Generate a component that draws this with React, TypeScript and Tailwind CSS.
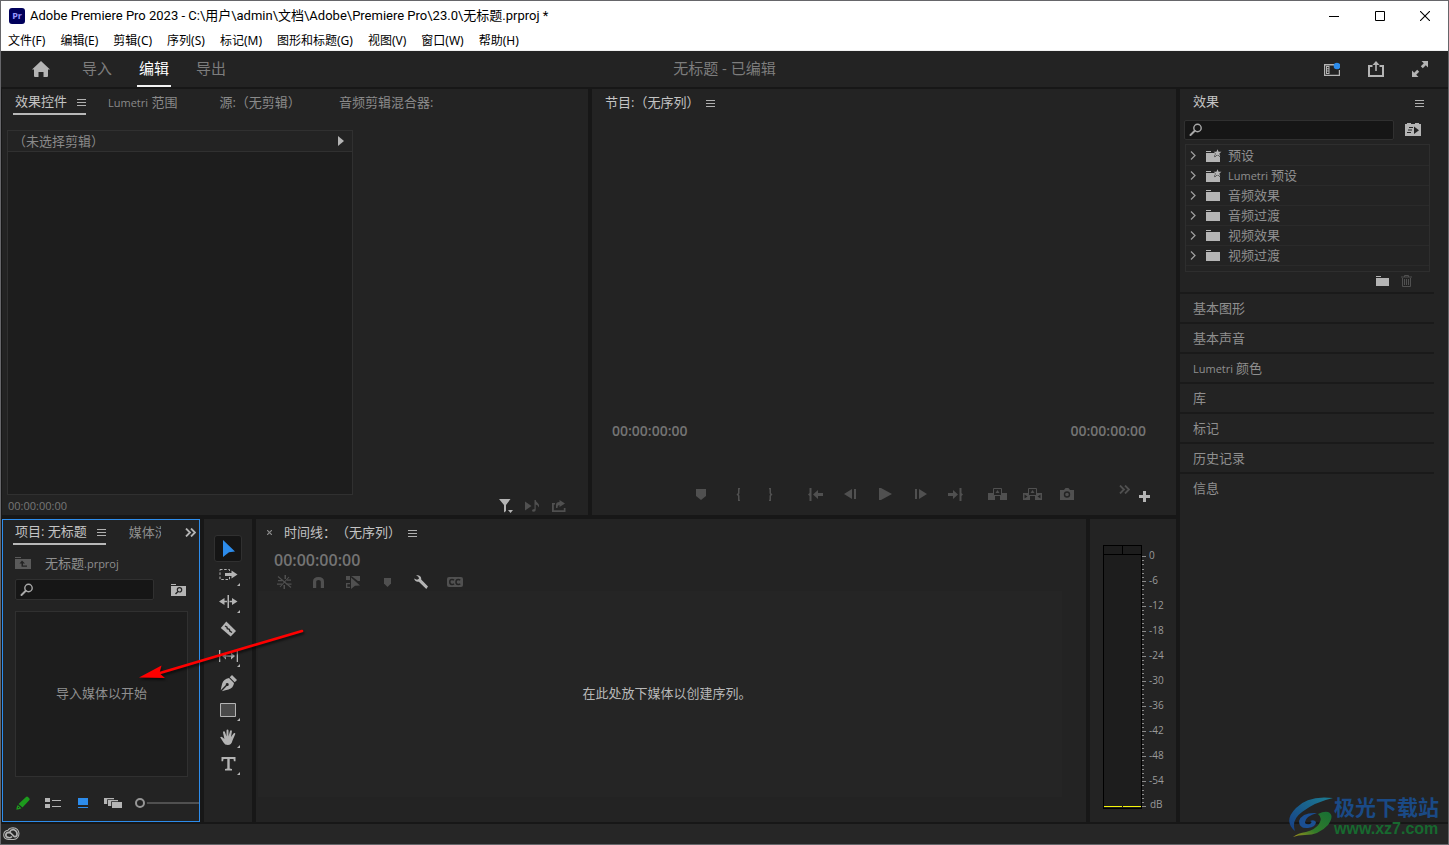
import type { ReactNode } from "react";

type IconProps = { w: number; h: number; className?: string; children: ReactNode };

function Icon({ w, h, className = "", children }: IconProps) {
  return (
    <svg
      width={w}
      height={h}
      viewBox={`0 0 ${w} ${h}`}
      fill="currentColor"
      aria-hidden="true"
      className={`block shrink-0 ${className}`}
    >
      {children}
    </svg>
  );
}

const MenuLines = () => (
  <Icon w={9} h={11} className="text-[#b0b0b0]">
    <path d="M0 3h9v1H0zM0 6h9v1H0zM0 9h9v1H0z" />
  </Icon>
);

const SearchGlyph = () => (
  <Icon w={14} h={14} className="text-[#a8a8a8]">
    <circle cx="8.5" cy="5" r="3.7" fill="none" stroke="currentColor" strokeWidth="1.4" />
    <path d="M5.8 7.8L1.5 12" stroke="currentColor" strokeWidth="2" strokeLinecap="round" />
  </Icon>
);

const FolderGlyph = () => (
  <Icon w={14} h={12}>
    <path d="M0 0h5v1H0zM0 2h14v9H0z" />
  </Icon>
);

const PresetGlyph = () => (
  <Icon w={16} h={14}>
    <path d="M0 2h5v1H0zM0 4h14v9H0z" />
    <path
      d="M11.500.3l1.100 2.500h2.900l-2.200 1.800 1 3-2.800-1.800-2.800 1.800 1-3-2.200-1.800h2.900z"
      stroke="#232323"
      strokeWidth="1"
      paintOrder="stroke"
    />
  </Icon>
);

const Chevrons = () => (
  <Icon w={11} h={9}>
    <path d="M1 .5l4 4-4 4M6 .5l4 4-4 4" fill="none" stroke="currentColor" strokeWidth="1.8" />
  </Icon>
);

const MarkerGlyph = () => (
  <Icon w={10} h={11}>
    <path d="M0 0h10v7l-5 4-5-4z" />
  </Icon>
);

const menus = ["文件(F)", "编辑(E)", "剪辑(C)", "序列(S)", "标记(M)", "图形和标题(G)", "视图(V)", "窗口(W)", "帮助(H)"];

function TitleBar() {
  return (
    <header className="border-b border-[#f0f0f0] bg-white text-black">
      <div className="flex h-[29px] items-center pl-2">
        <span className="flex h-4 w-4 items-center justify-center rounded-[3px] bg-[#00005b] text-[9px] font-bold leading-none text-[#9999ff]">
          Pr
        </span>
        <h1 className="ml-[5px] flex-1 font-['Roboto','Noto_Sans_CJK_SC',sans-serif] text-[13px] leading-4">
          Adobe Premiere Pro 2023 - C:\用户\admin\文档\Adobe\Premiere Pro\23.0\无标题.prproj *
        </h1>
        <button aria-label="最小化" className="flex h-7 w-[46px] items-center justify-center">
          <Icon w={10} h={10}><path d="M0 5h10v1H0z" /></Icon>
        </button>
        <button aria-label="最大化" className="flex h-7 w-[45px] items-center justify-center">
          <Icon w={10} h={10}><path d="M.5.5h9v9h-9z" fill="none" stroke="currentColor" /></Icon>
        </button>
        <button aria-label="关闭" className="flex h-7 w-[46px] items-center justify-center">
          <Icon w={10} h={10}><path d="M0 0l10 10M10 0L0 10" stroke="currentColor" strokeWidth="1.100" /></Icon>
        </button>
      </div>
      <nav className="flex h-5 items-center gap-[15px] pt-[2px] pl-[7px] font-['Noto_Sans','Noto_Sans_CJK_SC',sans-serif] text-[12px] leading-4">
        {menus.map((m) => (
          <button key={m}>{m}</button>
        ))}
      </nav>
    </header>
  );
}

function WorkspaceBar() {
  return (
    <div className="grid h-9 shrink-0 grid-cols-[1fr_auto_1fr] items-center bg-[#232323]">
      <div className="flex h-full items-center pl-[31px] text-[15px] leading-5 text-[#7d7d7d]">
        <button aria-label="主页" className="text-[#b4b4b4]">
          <Icon w={18} h={16}>
            <path d="M9 0l9 8.500h-2V15q0 1-1 1h-3.500v-5h-5v5H3q-1 0-1-1V8.500H0z" />
          </Icon>
        </button>
        <button className="ml-[30px] h-full border-b-2 border-transparent px-[2px]">导入</button>
        <button className="ml-[23px] h-full border-b-2 border-[#f2f2f2] px-[2px] text-white">编辑</button>
        <button className="ml-[23px] h-full border-b-2 border-transparent px-[2px]">导出</button>
      </div>
      <div className="pb-[2px] text-[15px] leading-5 text-[#7d7d7d]">无标题 - 已编辑</div>
      <div className="flex items-center justify-end gap-7 pr-5 text-[#b4b4b4]">
        <button aria-label="工作区">
          <Icon w={16} h={15}>
            <path d="M0 2h10v1.500H1.200v9.300h13.600V8H16v6H0z" />
            <path d="M2 4h3.500v8H2zM3 5v1.300h1.500V5zM3 7.300v1.300h1.500V7.300zM3 9.600v1.300h1.500V9.600z" fillRule="evenodd" />
            <circle cx="13" cy="4" r="3.300" fill="#2d8ceb" />
          </Icon>
        </button>
        <button aria-label="快速导出">
          <Icon w={16} h={16}>
            <path d="M4.500 5H1v10h14V5h-3.500" fill="none" stroke="currentColor" strokeWidth="2" />
            <path d="M7.200 3h1.600v7H7.200zM8 0l3.500 4h-7z" />
          </Icon>
        </button>
        <button aria-label="全屏">
          <Icon w={16} h={16}>
            <path d="M9.500 0H16v6.500l-2.200-2.200-3 3-2-2 3-3zM0 9.500l2.200 2.200 3-3 2 2-3 3L6.500 16H0z" />
          </Icon>
        </button>
      </div>
    </div>
  );
}

function EffectControls() {
  return (
    <section className="flex min-w-0 flex-[586] flex-col bg-[#232323]">
      <div className="flex h-[26px] shrink-0 items-stretch pl-[11px] text-[13px] leading-[26px] text-[#8a8a8a]">
        <button className="flex items-center gap-[10px] border-b-2 border-[#b8b8b8] pl-[2px] text-[#c4c4c4]">
          效果控件 <MenuLines />
        </button>
        <button className="ml-[22px]"><span className="text-[11px]">Lumetri</span> 范围</button>
        <button className="ml-[42px]">源:（无剪辑）</button>
        <button className="ml-[38px]">音频剪辑混合器:</button>
      </div>
      <div className="mt-[15px] ml-[5px] flex w-[346px] flex-1 flex-col border border-[#303030] bg-[#1d1d1d]">
        <div className="flex h-[21px] items-center justify-between border-b border-[#303030] bg-[#232323] pr-2 pl-[5px] text-[13px] leading-5 text-[#8a8a8a]">
          （未选择剪辑）
          <Icon w={6} h={10} className="text-[#b4b4b4]"><path d="M0 0l6 5-6 5z" /></Icon>
        </div>
      </div>
      <div className="flex h-5 items-center pt-[1px] pr-[22px] pl-[6px] text-[#505050]">
        <span className="flex-1 text-[11px] leading-4 text-[#777777]">00:00:00:00</span>
        <button aria-label="筛选属性" className="text-[#b4b4b4]">
          <Icon w={14} h={14}>
            <path d="M0 0h11.500L7 6v6l-2 1.500V6zM9 11h5l-2.500 3z" />
          </Icon>
        </button>
        <button aria-label="播放音频" className="ml-3">
          <Icon w={15} h={12}>
            <path d="M0 1.500l6.500 4.500L0 10.500zM9.500 0h1.200q.3 2 2 3 2.200 1.700.8 4.500-.1-2.500-2.800-3v5.500q0 1.800-2 1.800-1.700 0-1.700-1.300T9.500 9z" />
          </Icon>
        </button>
        <button aria-label="导出" className="ml-3">
          <Icon w={14} h={12}>
            <path d="M0 3h3v1.500H1.800v5.700h10V8H13.500v4H0z" />
            <path d="M4 8V5q0-3 3.500-3V0L13 3.500 7.500 7V5Q5.500 5 5.500 8z" />
          </Icon>
        </button>
      </div>
    </section>
  );
}

function ControlButton({ label, wide = true, children }: { label: string; wide?: boolean; children: ReactNode }) {
  return (
    <button aria-label={label} className={`flex h-5 items-center justify-center ${wide ? "w-[35px]" : "w-8"}`}>
      {children}
    </button>
  );
}

const BraceIn = "M2 0h2v1.300H3.500v3.900L2.800 6.500l.7 1.300v3.900H4V13H2V8L.5 6.500 2 5z";
const BraceOut = "M3 0H1v1.300h.5v3.900l.7 1.300-.7 1.300v3.900H1V13h2V8l1.500-1.500L3 5z";

function ProgramMonitor() {
  return (
    <section className="flex min-w-0 flex-[584] flex-col bg-[#232323]">
      <div className="flex h-[26px] items-center gap-[7px] pl-[13px] text-[13px] leading-[26px] text-[#c4c4c4]">
        节目:（无序列） <MenuLines />
      </div>
      <div className="flex-1" />
      <div className="flex justify-between px-5 pr-[30px] text-[14px] font-semibold leading-5 text-[#747474]">
        <span>00:00:00:00</span>
        <span>00:00:00:00</span>
      </div>
      <div className="mt-[43px] mb-[11px] grid h-5 grid-cols-[1fr_auto_1fr] items-center text-[#505050]">
        <span />
        <div className="flex items-center">
          <ControlButton label="添加标记"><MarkerGlyph /></ControlButton>
          <div className="mr-[11px] ml-1 flex">
            <ControlButton label="标记入点" wide={false}><Icon w={5} h={13}><path d={BraceIn} /></Icon></ControlButton>
            <ControlButton label="标记出点" wide={false}><Icon w={5} h={13}><path d={BraceOut} /></Icon></ControlButton>
          </div>
          <ControlButton label="转到入点">
            <Icon w={15} h={13}><path d="M1.500 0h2v13h-2V8L0 6.500 1.500 5zM5 6.500L10 2v3h5v3h-5v3z" /></Icon>
          </ControlButton>
          <ControlButton label="后退一帧">
            <Icon w={13} h={10}><path d="M0 5l8-5v10zM10 0h2v10h-2z" /></Icon>
          </ControlButton>
          <ControlButton label="播放">
            <Icon w={13} h={12}><path d="M0 0h2l11 6-11 6H0z" /></Icon>
          </ControlButton>
          <ControlButton label="前进一帧">
            <Icon w={13} h={10}><path d="M13 5L5 0v10zM1 0h2v10H1z" /></Icon>
          </ControlButton>
          <ControlButton label="转到出点">
            <Icon w={15} h={13}><path d="M13.500 0h-2v13h2V8L15 6.500 13.500 5zM10 6.500L5 2v3H0v3h5v3z" /></Icon>
          </ControlButton>
          <div className="ml-[7px] flex">
            <ControlButton label="提升">
              <Icon w={19} h={12}>
                <path d="M0 5h7v7H0zM12 5h7v7h-7z" />
                <path d="M5.500.5h8v7h-8z" fill="#232323" stroke="currentColor" />
                <path d="M9.500 2l2 3h-4z" />
              </Icon>
            </ControlButton>
            <ControlButton label="提取">
              <Icon w={19} h={12}>
                <path d="M0 5h7v7H0zM12 5h7v7h-7z" />
                <path d="M5.500.5h8v7h-8z" fill="#232323" stroke="currentColor" />
                <path d="M9.500 2l2 3h-4z" />
                <path d="M1.500 6.500l3 2-3 2zM17.500 6.500l-3 2 3 2z" fill="#232323" />
              </Icon>
            </ControlButton>
            <ControlButton label="导出帧">
              <Icon w={14} h={12}>
                <path d="M0 2h4l1.500-2h3L10 2h4v10H0z" />
                <circle cx="7" cy="6.500" r="2.500" fill="none" stroke="#232323" strokeWidth="1.400" />
              </Icon>
            </ControlButton>
          </div>
        </div>
        <div className="flex items-start justify-end gap-[9px] pr-[26px] pb-[2px]">
          <button aria-label="更多"><Chevrons /></button>
          <button aria-label="按钮编辑器" className="pt-[6px] text-[#b4b4b4]">
            <Icon w={11} h={11}><path d="M4 0h3v4h4v3H7v4H4V7H0V4h4z" /></Icon>
          </button>
        </div>
      </div>
    </section>
  );
}

const effectFolders = [
  { latin: "", name: "预设", preset: true },
  { latin: "Lumetri", name: "预设", preset: true },
  { latin: "", name: "音频效果", preset: false },
  { latin: "", name: "音频过渡", preset: false },
  { latin: "", name: "视频效果", preset: false },
  { latin: "", name: "视频过渡", preset: false },
];
const collapsedPanels = [
  { latin: "", name: "基本图形" },
  { latin: "", name: "基本声音" },
  { latin: "Lumetri", name: "颜色" },
  { latin: "", name: "库" },
  { latin: "", name: "标记" },
  { latin: "", name: "历史记录" },
  { latin: "", name: "信息" },
];

function Label({ latin, name }: { latin: string; name: string }) {
  return <span>{latin && <span className="text-[11px]">{latin} </span>}{name}</span>;
}

function EffectsPanel() {
  return (
    <aside className="w-[268px] shrink-0 bg-[#232323] text-[13px] text-[#8f8f8f]">
      <div className="flex h-[26px] items-center justify-between pr-6 pl-[13px] text-[#c4c4c4]">
        <h2>效果</h2>
        <button aria-label="面板菜单"><MenuLines /></button>
      </div>
      <div className="mt-[5px] flex h-5 items-center gap-[11px] pl-1">
        <label className="flex h-5 w-[210px] items-center rounded-[2px] border border-[#303030] bg-[#161616] pl-1">
          <SearchGlyph />
          <input aria-label="搜索效果" className="h-4 w-full bg-transparent px-1 text-[12px] outline-none" />
        </label>
        <button aria-label="加速效果" className="text-[#b4b4b4]">
          <Icon w={16} h={14}>
            <path d="M2 0h4v1h4V0h4v1h2v12H0V1h2z" />
            <path d="M9 3.500l5 3.700-5 3.700zM4 4h4v1H4zM3 6.500h4v1H3zM2 9h4v1H2z" fill="#232323" />
          </Icon>
        </button>
      </div>
      <ul className="mt-1 ml-[5px] w-[245px] border border-[#2e2e2e] pt-[1px] pb-[5px] leading-[19px]">
        {effectFolders.map((f) => (
          <li key={f.latin + f.name} className="h-5 border-b border-[#2a2a2a]">
            <button className="flex h-[19px] w-full items-center pl-1">
              <Icon w={6} h={9} className="text-[#a0a0a0]">
                <path d="M1 .5l4 4-4 4" fill="none" stroke="currentColor" strokeWidth="1.200" />
              </Icon>
              <span className="ml-[10px] w-[22px] text-[#b4b4b4]">{f.preset ? <PresetGlyph /> : <FolderGlyph />}</span>
              <Label latin={f.latin} name={f.name} />
            </button>
          </li>
        ))}
      </ul>
      <div className="flex h-5 items-center justify-end gap-3 pr-9 pb-[2px]">
        <button aria-label="新建自定义素材箱" className="text-[#b4b4b4]">
          <Icon w={13} h={10}><path d="M0 0h5v1H0zM0 2h13v8H0z" /></Icon>
        </button>
        <button aria-label="删除" className="text-[#505050]">
          <Icon w={11} h={12}>
            <path d="M0 2h11M3.500 2V.5h4V2M1.500 3v8.500h8V3M3.500 4v6M5.500 4v6M7.500 4v6" fill="none" stroke="currentColor" />
          </Icon>
        </button>
      </div>
      <div className="mr-[14px] leading-7">
        {collapsedPanels.map((p) => (
          <button key={p.name} className="block h-[30px] w-full border-t-2 border-[#1a1a1a] pl-[13px] text-left">
            <Label latin={p.latin} name={p.name} />
          </button>
        ))}
      </div>
    </aside>
  );
}

function ProjectPanel() {
  return (
    <section className="flex w-[198px] shrink-0 flex-col overflow-hidden border border-[#2d8ceb] bg-[#232323] text-[13px] text-[#8f8f8f]">
      <div className="flex h-[25px] shrink-0 pl-[10px]">
        <button className="flex shrink-0 items-center gap-[10px] border-b-2 border-[#b8b8b8] pl-[2px] text-[#c4c4c4]">
          项目: 无标题 <MenuLines />
        </button>
        <button className="ml-[23px] w-8 overflow-hidden text-left leading-[23px] whitespace-nowrap">媒体浏览器</button>
        <button aria-label="更多面板" className="ml-6 text-[#b4b4b4]"><Chevrons /></button>
      </div>
      <div className="mt-2 flex h-5 items-center gap-[14px] pl-3">
        <Icon w={16} h={12} className="text-[#5a5a5a]">
          <path d="M0 0h6v1H0zM0 2h16v10H0z" />
          <path d="M7 3.500l3 3H8v2h4v1.200H6.500V6.500h-2z" fill="#232323" />
        </Icon>
        <span className="leading-5">无标题<span className="text-[11px]">.prproj</span></span>
      </div>
      <div className="mt-[6px] flex h-[21px] items-center gap-[17px] pl-3">
        <label className="flex h-[21px] w-[139px] items-center rounded-[2px] border border-[#303030] bg-[#161616] pl-1">
          <SearchGlyph />
          <input aria-label="搜索项目" className="h-4 w-full bg-transparent px-1 text-[12px] outline-none" />
        </label>
        <button aria-label="从查询创建新的搜索素材箱" className="text-[#b4b4b4]">
          <Icon w={15} h={12}>
            <path d="M0 0h5v1H0zM0 2h15v10H0z" />
            <circle cx="8.500" cy="5.800" r="2.200" fill="none" stroke="#232323" strokeWidth="1.200" />
            <path d="M7 7.500L4.500 10" stroke="#232323" strokeWidth="1.400" />
          </Icon>
        </button>
      </div>
      <div className="mt-[11px] mr-[11px] ml-3 flex flex-1 items-center justify-center border border-[#303030] bg-[#1d1d1d]">
        导入媒体以开始
      </div>
      <div className="mt-4 mb-2 flex h-5 items-center pl-[13px] text-[#b4b4b4]">
        <button aria-label="项目可写" className="text-[#1d9a1d]">
          <Icon w={14} h={14}>
            <path d="M10 1q1-1 2 0l1.200 1.200q1 1 0 2L6.500 11.500 2.500 8zM1.800 9l3.700 3.300Q3 13.500.3 13.700q0-2.700 1.500-4.700z" />
            <path d="M2 11l1 1" stroke="#232323" />
          </Icon>
        </button>
        <button aria-label="列表视图" className="ml-[15px]">
          <Icon w={16} h={10}><path d="M0 0h5v4H0zM0 6h5v4H0zM7 2h9v1H7zM7 8h9v1H7z" /></Icon>
        </button>
        <button aria-label="图标视图" className="ml-[17px] text-[#2d8ceb]">
          <Icon w={10} h={10}><path d="M0 0h10v7H0zM0 9h10v1H0z" /></Icon>
        </button>
        <button aria-label="自由变换视图" className="ml-4">
          <Icon w={18} h={10}>
            <path d="M0 0h10v1.200H3.200V6H0zM4 2h10v1.200H7.200V8H4zM8 4h10v6H8z" />
          </Icon>
        </button>
        <input
          type="range"
          aria-label="调整图标大小"
          defaultValue={0}
          className="ml-[13px] h-4 w-20 shrink-0 appearance-none bg-transparent [&::-webkit-slider-runnable-track]:h-[2px] [&::-webkit-slider-runnable-track]:bg-[#505050] [&::-webkit-slider-thumb]:-mt-1 [&::-webkit-slider-thumb]:h-[10px] [&::-webkit-slider-thumb]:w-[10px] [&::-webkit-slider-thumb]:appearance-none [&::-webkit-slider-thumb]:rounded-full [&::-webkit-slider-thumb]:border-2 [&::-webkit-slider-thumb]:border-[#969696] [&::-webkit-slider-thumb]:bg-[#232323] [&::-webkit-slider-thumb]:shadow-[0_0_0_2px_#232323]"
        />
      </div>
    </section>
  );
}

const tools: { label: string; flyout: boolean; art: ReactNode }[] = [
  { label: "选择工具", flyout: false, art: <path d="M4 1l12 11.500-6 .8L4 18z" fill="#2d8ceb" /> },
  {
    label: "向前选择轨道工具",
    flyout: true,
    art: (
      <>
        <path d="M1 3.500h9.500v10H1z" fill="none" stroke="currentColor" strokeDasharray="2.500 1.700" />
        <path d="M6 7h6.500V4.500l6 4-6 4V10H6z" stroke="#232323" strokeWidth="1" paintOrder="stroke" />
      </>
    ),
  },
  { label: "波纹编辑工具", flyout: true, art: <path d="M8.500 2h1.500v13H8.500zM0 8.500L5.500 5v2.700H8v1.600H5.500V12zM18.500 8.500L13 5v2.700h-2.500v1.600H13V12z" /> },
  {
    label: "剃刀工具",
    flyout: false,
    art: (
      <>
        <path d="M7.300 1.500L17 11l-5.300 5.500L1.800 8z" />
        <path d="M6 6l2 1.200.3 1.600 2 .5.500 1.700L13 12.500" fill="none" stroke="#232323" strokeWidth="1.400" />
      </>
    ),
  },
  { label: "外滑工具", flyout: true, art: <path d="M0 3h1.300v12H0zM17.700 3H19v12h-1.300zM3 9l4-3.500v2.800h5V5.500L16 9l-4 3.500V9.700H7v2.800z" /> },
  {
    label: "钢笔工具",
    flyout: false,
    art: (
      <>
        <path d="M10.700 3.300L13 1l5 5-2.300 2.300z" />
        <path d="M10 4l5 5q-.6 5.200-5.500 6.500-3 .8-6.700 1.800l5-5.300a1.500 1.500 0 1 0-1-1L1.700 16.300q.8-4 1.500-6.800Q4.500 5 10 4z" />
      </>
    ),
  },
  { label: "矩形工具", flyout: true, art: <path d="M1.500 2.500h15v13h-15z" fill="#4a4a4a" stroke="currentColor" /> },
  {
    label: "手形工具",
    flyout: true,
    art: (
      <path d="M1.200 9.200q1-1 2.200 0l2 1.800L4 4.500q0-1.200 1-1.200.7 0 1 .9L7.500 8.500V2.600q.1-1.100 1-1.100t1 1.100v5.800L11 3q.4-1 1.200-.8.9.3.7 1.300l-.9 5.500 2.500-3.500q.7-.8 1.400-.4.7.5.2 1.400l-2.600 6q-1 4.500-4.700 4.500-3 0-4.300-2.500z" />
    ),
  },
  { label: "文字工具", flyout: true, art: <path d="M2.500 2h14v4.200h-1.600L14.500 4h-3.800v9.600l2.300.4v1.500H6V14l2.300-.4V4H4.500l-.4 2.200H2.500z" /> },
];

function Toolbox() {
  return (
    <section aria-label="工具" className="flex w-12 shrink-0 flex-col items-center bg-[#232323] pt-4 text-[#b4b4b4]">
      {tools.map((t, i) => (
        <button
          key={t.label}
          aria-label={t.label}
          className={`relative flex h-[27px] w-7 items-center justify-center ${
            i === 0 ? "rounded-[3px] border border-[#303030] bg-[#151515]" : ""
          }`}
        >
          <Icon w={19} h={19}>{t.art}</Icon>
          {t.flyout && (
            <Icon w={3} h={3} className="absolute right-[2px] bottom-[3px]"><path d="M3 0v3H0z" /></Icon>
          )}
        </button>
      ))}
    </section>
  );
}

const timelineOptions: { label: string; active: boolean; art: ReactNode }[] = [
  {
    label: "嵌套序列",
    active: false,
    art: (
      <>
        <path d="M7.500 0H9v4H7.500zM6.500 10H8v4H6.500zM1 5h4v1.300H1zM0 8.500h5v1.300H0zM10 4.500h4v1.300h-4zM9.500 8.500h5v1.300h-5z" />
        <path d="M1 1.500l13 11M12 2L3 12" fill="none" stroke="currentColor" strokeWidth="1.100" />
      </>
    ),
  },
  { label: "对齐", active: false, art: <path d="M2 13V6.500Q2 2 7.500 2T13 6.500V13h-3.200V6.500Q9.800 5 7.500 5T5.200 6.500V13z" /> },
  {
    label: "链接选择项",
    active: false,
    art: <path d="M1 1h4v4H1zM6 1h9v5h-2L7 1.500zM1 8h4v1.300H2.300v2.400H5V13H1zM6 2.500L15 10.500l-5 .3L6 14z" />,
  },
  { label: "添加标记", active: false, art: <path d="M5 3h7v5.500L8.500 12 5 8.500z" /> },
  {
    label: "时间轴显示设置",
    active: true,
    art: <path d="M3 0l3 .5q2.500 1 2.200 4l6.800 7-1.700 2.500-7.500-7.300Q2.500 7.500 1 3.500l3 1.300L6 3.700 5.500 2z" />,
  },
  {
    label: "字幕轨道选项",
    active: false,
    art: (
      <>
        <rect x="0" y="2" width="16" height="10" rx="2" />
        <path d="M7 5.300Q6.300 4.500 5 4.500 2.800 4.500 2.800 7T5 9.500q1.300 0 2-.8M13.200 5.300q-.7-.8-2-.8Q9 4.500 9 7t2.200 2.500q1.300 0 2-.8" fill="none" stroke="#232323" strokeWidth="1.500" />
      </>
    ),
  },
];

function Timeline() {
  return (
    <section className="flex min-w-0 flex-1 flex-col bg-[#232323]">
      <div className="flex h-[27px] shrink-0 items-center pl-[11px] text-[13px] text-[#c4c4c4]">
        <button aria-label="关闭时间线" className="text-[#8a8a8a]">
          <Icon w={5} h={5}><path d="M0 0l5 5M5 0L0 5" stroke="currentColor" strokeWidth="1.200" /></Icon>
        </button>
        <span className="mr-[7px] ml-3">时间线：（无序列）</span>
        <button aria-label="面板菜单"><MenuLines /></button>
      </div>
      <div className="mt-1 pl-[18px] text-[16px] font-semibold leading-5 text-[#747474]">00:00:00:00</div>
      <div className="mt-1 flex h-4 items-center gap-[18px] pl-[21px]">
        {timelineOptions.map((o) => (
          <button key={o.label} aria-label={o.label} className={o.active ? "text-[#b4b4b4]" : "text-[#505050]"}>
            <Icon w={16} h={15}>{o.art}</Icon>
          </button>
        ))}
      </div>
      <div className="mt-[1px] mr-6 mb-[25px] ml-[2px] flex flex-1 items-center justify-center bg-[#252525] pl-[14px] text-[13px] text-[#b8b8b8]">
        在此处放下媒体以创建序列。
      </div>
    </section>
  );
}

const levels = ["0", "-6", "-12", "-18", "-24", "-30", "-36", "-42", "-48", "-54"];
const ticks = Array.from({ length: 61 }, (_, i) => i);

function AudioMeter() {
  return (
    <section aria-label="音频仪表" className="flex w-[86px] shrink-0 bg-[#232323] pt-[26px] pl-[13px]">
      <svg width="44" height="264" viewBox="0 0 44 264" shapeRendering="crispEdges" aria-hidden="true">
        <path d="M.5.5h38v263H.5zM0 9.500h38M19.500 0v9" fill="#1d1d1d" stroke="#000" />
        <path d="M1 261h18v1H1zM20 261h18v1H20z" fill="#f5f50a" />
        {ticks.map((t) => (
          <rect key={t} x="39" y={Math.round(11 + t * 4.17)} width={t % 6 === 0 ? 4 : 2} height="1" fill="#8a8a8a" />
        ))}
      </svg>
      <div className="pl-[2px] text-[10px] leading-5 text-[#9a9a9a]">
        {levels.map((l) => (
          <div key={l} className="h-[25px]">{l}</div>
        ))}
        <div className="pl-[1px] leading-[18px]">dB</div>
      </div>
    </section>
  );
}

function PointerArrow() {
  return (
    <svg
      width="172"
      height="60"
      viewBox="0 0 172 60"
      className="pointer-events-none absolute top-[106px] left-[132px] drop-shadow-[1px_2px_1px_rgba(0,0,0,0.6)]"
      aria-hidden="true"
    >
      <path d="M168 6L26 48" stroke="#fe0000" strokeWidth="2.600" strokeLinecap="round" />
      <path d="M5 52.500L27.500 40.500 25.500 48.200 31 53z" fill="#fe0000" />
    </svg>
  );
}

function SiteMark() {
  return (
    <div className="pointer-events-none absolute right-[9px] bottom-[5px] flex items-center">
      <svg width="46" height="44" viewBox="0 0 46 44" aria-hidden="true">
        <defs>
          <linearGradient id="swooshBlue" x1="1" y1="0" x2="0" y2="1">
            <stop offset="0" stopColor="#1c7d92" />
            <stop offset="1" stopColor="#173f86" />
          </linearGradient>
          <linearGradient id="swooshGreen" x1="1" y1="0" x2="0" y2="1">
            <stop offset="0" stopColor="#176f35" />
            <stop offset=".6" stopColor="#317a2a" />
            <stop offset="1" stopColor="#a0901c" />
          </linearGradient>
        </defs>
        <path d="M45 3Q20 0 8 13-5 26 7 36 3 25 14 17 27 7 45 3z" fill="url(#swooshBlue)" />
        <path d="M30 19q6-3 10-2 7 3 0 13-9 10-23 10-7 0-12 2 5-4 13-5 10-3 13-8 4-6-1-10z" fill="url(#swooshGreen)" />
        <path d="M29 18q-15-1-18 8 0 8 9 7 8-1 8-6-2-3-6-1 3 1 0 3-5 1-5-2 1-6 12-9z" fill="#1b4f92" />
      </svg>
      <div className="font-bold">
        <div className="text-[21px] leading-6 text-[#1a4a86]">极光下载站</div>
        <div className="font-['Liberation_Sans',sans-serif] text-[16px] leading-5 text-[#17692f]">www.xz7.com</div>
      </div>
    </div>
  );
}

export default function App() {
  return (
    <div className="relative flex h-screen flex-col overflow-hidden border border-[#66666a] bg-[#171717] font-['Open_Sans','Noto_Sans_CJK_SC',sans-serif] [text-spacing-trim:space-all] select-none">
      <TitleBar />
      <WorkspaceBar />
      <main className="mt-[2px] mb-[2px] ml-[1px] flex min-h-0 flex-1 gap-1">
        <div className="flex min-w-0 flex-1 flex-col gap-1">
          <div className="flex min-h-0 flex-[426] gap-1">
            <EffectControls />
            <ProgramMonitor />
          </div>
          <div className="relative flex min-h-0 flex-[303] gap-1">
            <ProjectPanel />
            <Toolbox />
            <Timeline />
            <AudioMeter />
            <PointerArrow />
          </div>
        </div>
        <EffectsPanel />
      </main>
      <footer className="flex h-5 shrink-0 items-center bg-[#262626] pl-[2px] text-[#b4b4b4]">
        <button aria-label="Creative Cloud">
          <Icon w={17} h={14}>
            <path
              d="M5 3.300Q6.500.7 10 .7q5.500.3 6 5.800-.3 5.500-5.500 6H5.500Q.8 12 .7 8 1 3.700 5 3.300z"
              fill="none"
              stroke="currentColor"
              strokeWidth="1.100"
            />
            <path
              d="M9 9.500Q7.500 11 5.700 10.700 3 10.500 2.800 8 3 5.500 5.500 5.300q1.500 0 2.700 1.200l3 3q1.700.7 2.700-1 .8-4.500-3-5.800-3.200-.3-4 2"
              fill="none"
              stroke="currentColor"
              strokeWidth="1.700"
            />
          </Icon>
        </button>
      </footer>
      <SiteMark />
    </div>
  );
}
